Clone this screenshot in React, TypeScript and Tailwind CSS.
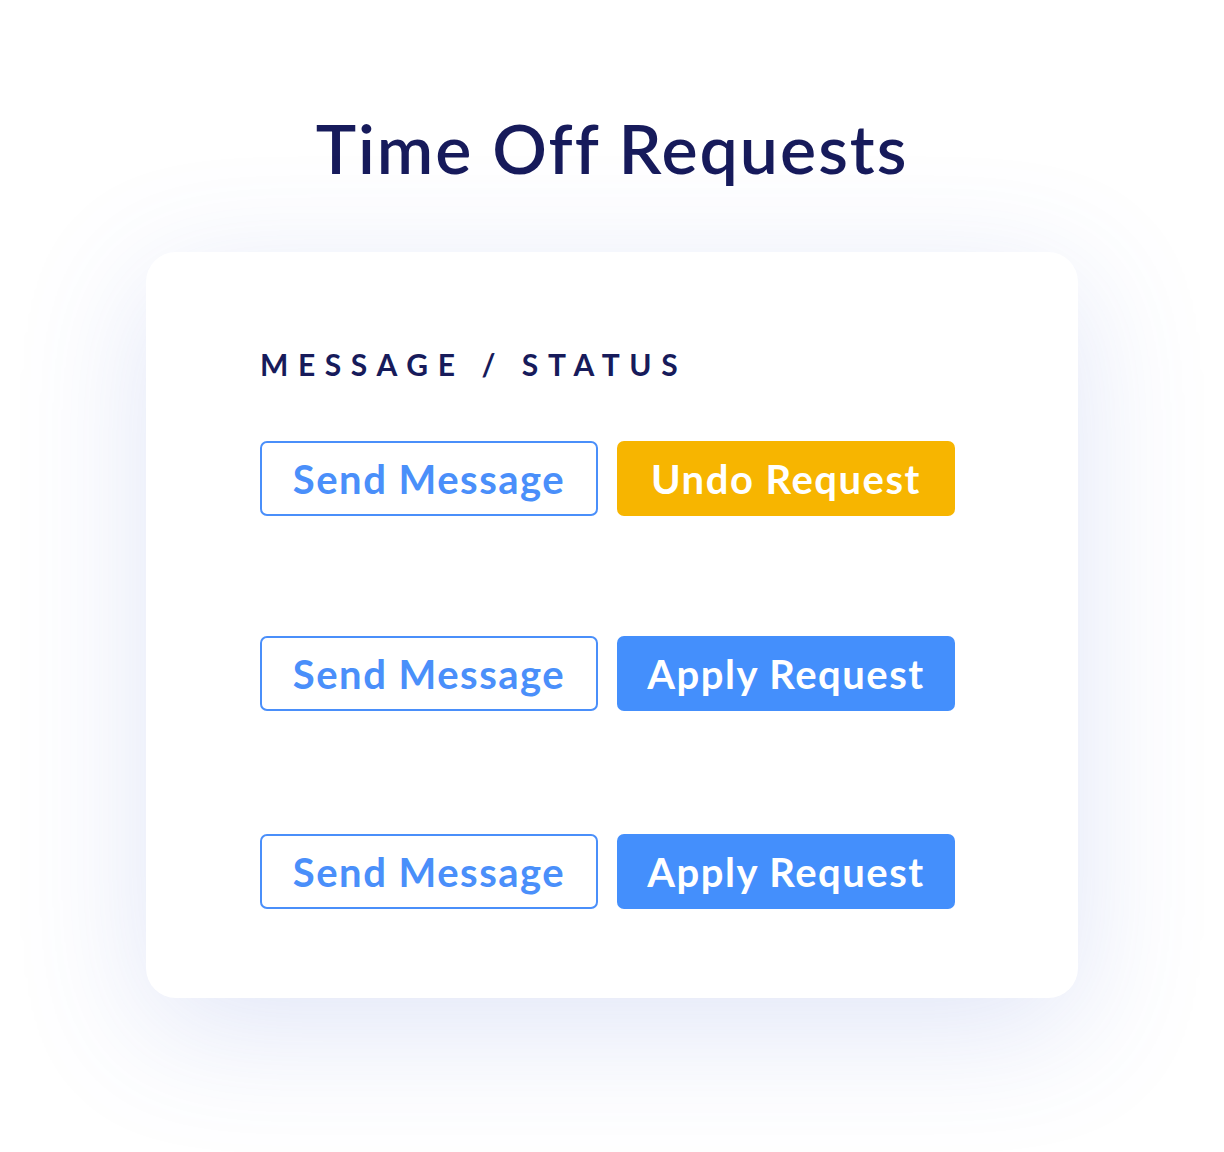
export default function App() {
  const font = { fontFamily: 'Lato, "Open Sans", sans-serif' }
  return (
    <div className="flex flex-col items-center w-full min-h-[1152px] bg-white" style={font}>
      {/* Title */}
      <h1 className="mt-[106px] text-[68px] leading-[84px] font-semibold text-[#171b5b] tracking-[2px]">
        Time Off Requests
      </h1>

      {/* Card */}
      <div className="mt-[62px] w-[932px] h-[746px] bg-white rounded-[30px] shadow-[0_30px_130px_rgba(70,100,210,0.17)] pl-[114px] pt-[94px]">
        <p className="text-[30px] leading-[36px] font-bold tracking-[0.32em] text-[#171b5b]">
          MESSAGE / STATUS
        </p>

        <div className="flex flex-col mt-[59px]">
          <ButtonRow label="Undo Request" tone="yellow" />
          <div className="h-[120px]" />
          <ButtonRow label="Apply Request" tone="blue" />
          <div className="h-[123px]" />
          <ButtonRow label="Apply Request" tone="blue" />
        </div>
      </div>
    </div>
  )
}

function ButtonRow({ label, tone }: { label: string; tone: 'yellow' | 'blue' }) {
  return (
    <div className="flex gap-[19px]">
      <button className="w-[338px] h-[75px] rounded-[7px] border-2 border-[#4a8ffa] bg-white text-[#4a8ffa] text-[40px] font-bold tracking-[1.5px]">
        Send Message
      </button>
      <button
        className={
          tone === 'yellow'
            ? 'w-[338px] h-[75px] rounded-[7px] bg-[#f7b500] text-white text-[40px] font-bold tracking-[1.5px]'
            : 'w-[338px] h-[75px] rounded-[7px] bg-[#448ffc] text-white text-[40px] font-bold tracking-[1.5px]'
        }
      >
        {label}
      </button>
    </div>
  )
}
